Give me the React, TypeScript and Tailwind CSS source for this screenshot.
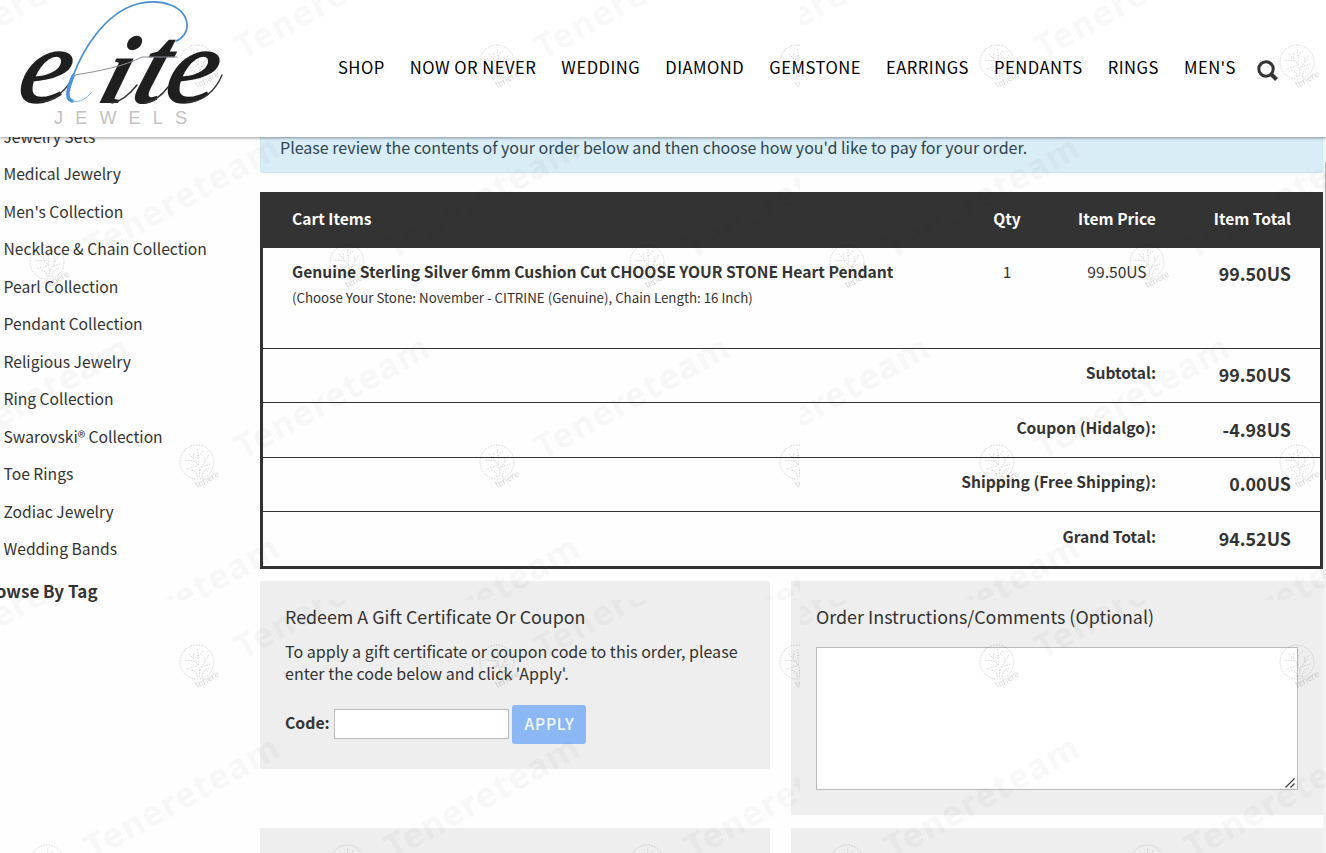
import React from "react";

type OrderRow = {
  label: string;
  value: string;
  height: string;
};

const navLinks = [
  "SHOP",
  "NOW OR NEVER",
  "WEDDING",
  "DIAMOND",
  "GEMSTONE",
  "EARRINGS",
  "PENDANTS",
  "RINGS",
  "MEN'S",
];

const categories = [
  "Jewelry Sets",
  "Medical Jewelry",
  "Men's Collection",
  "Necklace & Chain Collection",
  "Pearl Collection",
  "Pendant Collection",
  "Religious Jewelry",
  "Ring Collection",
  "Swarovski® Collection",
  "Toe Rings",
  "Zodiac Jewelry",
  "Wedding Bands",
];

const orderRows: OrderRow[] = [
  { label: "Subtotal:", value: "99.50US", height: "h-[54px] pt-[11px]" },
  { label: "Coupon (Hidalgo):", value: "-4.98US", height: "h-[55px] pt-[12px]" },
  { label: "Shipping (Free Shipping):", value: "0.00US", height: "h-[54px] pt-[11px]" },
  { label: "Grand Total:", value: "94.52US", height: "h-[55px] pt-[12px]" },
];

const Logo = () => (
  <svg width="230" height="137" viewBox="0 0 230 137" className="shrink-0">
    <g
      fontFamily="'Liberation Serif', serif"
      fontStyle="italic"
      fontSize="106"
      fill="#1f1f1f"
      stroke="#1f1f1f"
    >
      <text transform="translate(15 101.5) skewX(-12) scale(1.08 1)" strokeWidth="1.6">e</text>
      <text transform="translate(97 103) skewX(-17) scale(1 1)" fontWeight="bold" fontSize="97" stroke="none">i</text>
      <text transform="translate(129 103) skewX(-20) scale(0.92 1.06)" fontWeight="bold" stroke="none">t</text>
      <text transform="translate(162 101.5) skewX(-12) scale(1.08 1)" strokeWidth="1.6">e</text>
    </g>
    <g fill="none" strokeLinecap="round">
      <path d="M75 75 C100 71 125 66 142 57 L177 57" stroke="#8a8f94" strokeWidth="1" />
      <path d="M40 102 C56 101 68 88 74 75" stroke="#333" strokeWidth="1.4" />
      <path d="M187 102 C203 102 216 90 222 75" stroke="#333" strokeWidth="1.4" />
      <path d="M112 103 C122 101 130 94 137 85" stroke="#333" strokeWidth="1.4" />
      <path d="M145 103 C155 101 163 94 168 87" stroke="#333" strokeWidth="1.4" />
      <path
        d="M73 76 C82 52 103 14 137 4 C162 -2 185 6 187 24 C188 32 182 39 176 41"
        stroke="#4a8fcf"
        strokeWidth="1.7"
      />
      <path
        d="M73 76 C68 88 65 99 72 101 C80 103 87 98 91 93"
        stroke="#7fb3e2"
        strokeWidth="1"
      />
      <path d="M73 76 C68 88 65 99 72 101" stroke="#4a94dc" strokeWidth="3.6" />
    </g>
    <text
      x="54"
      y="124"
      fontFamily="'Liberation Sans', sans-serif"
      fontSize="18"
      fill="#c2c2c2"
      textLength="133"
    >
      JEWELS
    </text>
  </svg>
);

const SearchIcon = () => (
  <svg width="22" height="22" viewBox="0 0 22 22" fill="none" stroke="#333">
    <circle cx="9" cy="9" r="7.2" strokeWidth="3" />
    <path d="M14.2 14.2 L19.5 19.5" strokeWidth="4" />
  </svg>
);

// Small round tree emblem, centred on x,y
const Tree = ({ x, y }: { x: number; y: number }) => (
  <g transform={`translate(${x} ${y})`} fill="none" stroke="#000">
    <g strokeWidth="0.8" strokeDasharray="1.6 1.2" opacity="0.19">
      <circle r="17" />
      <path d="M2 15 C4 6 1 2 -4 -4 L-9 -9 M3 8 C7 1 9 -3 12 -7 M1 3 C2 -4 0 -9 1 -13 M-2 -1 L-12 -2 M0 4 L-11 7 M4 5 L13 2 M5 15 C6 9 8 6 12 7 M0 15 C0 10 -3 8 -7 8 M1 -6 L6 -11 M-4 -4 L-3 -10 M8 0 L7 -6" />
    </g>
    <text
      transform="translate(0 26) rotate(-28)"
      fontFamily="'Noto Sans', sans-serif"
      fontSize="9"
      textLength="26"
      fill="#000"
      fillOpacity="0.16"
      stroke="none"
    >
      tenere
    </text>
  </g>
);

const Mark = ({ x, y }: { x: number; y: number }) => (
  <text
    transform={`translate(${x} ${y}) rotate(-29)`}
    fontFamily="'Noto Sans', sans-serif"
    fontWeight="bold"
    fontSize="34"
    textLength="216"
    fill="#000"
    fillOpacity="0.026"
  >
    Tenereteam
  </text>
);

const Watermark = () => (
  <svg className="pointer-events-none absolute inset-0 z-20 h-full w-full">
    <defs>
      <pattern id="tenere" width="800" height="600" patternUnits="userSpaceOnUse">
        {[62, 462].map((y) =>
          [197, 497, 797].map((x) => <Tree key={`${x}-${y}`} x={x} y={y} />)
        )}
        {[47, 347, 647].map((x) => (
          <Tree key={x} x={x} y={262} />
        ))}
        {[60, 460].map((y) =>
          [-57, 243, 543].map((x) => <Mark key={`${x}-${y}`} x={x} y={y} />)
        )}
        {[260, 660].map((y) =>
          [93, 393, 693, -207].map((x) => <Mark key={`${x}-${y}`} x={x} y={y} />)
        )}
      </pattern>
    </defs>
    <rect width="100%" height="100%" fill="url(#tenere)" />
  </svg>
);

const Header = () => (
  <header className="relative z-10 flex h-[137px] w-full shrink-0 bg-white shadow-[0_1px_3px_rgba(0,0,0,0.4)]">
    <Logo />
    <nav className="ml-[108px] mt-[53px] flex h-7 gap-[25.1px] text-[16.6px] leading-7 tracking-[0.48px] text-black">
      {navLinks.map((link) => (
        <a key={link} href="#" className="whitespace-nowrap">
          {link}
        </a>
      ))}
    </nav>
    <button className="ml-[21px] mt-[60px] h-[22px] w-[22px]" aria-label="Search">
      <SearchIcon />
    </button>
  </header>
);

const Sidebar = () => (
  <aside className="-mt-[19.5px] w-[260px] shrink-0">
    <ul className="pl-[3.5px] text-[15.65px] leading-[37.5px]">
      {categories.map((category) => (
        <li key={category} className="h-[37.5px] whitespace-nowrap">
          {category}
        </li>
      ))}
    </ul>
    <h3 className="-ml-[23px] mt-[4px] text-[17px] font-bold leading-[38px]">
      Browse By Tag
    </h3>
  </aside>
);

const CartTable = () => (
  <section className="mt-[19px] flex h-[377px] flex-col border-[3px] border-[#333]">
    <div className="flex h-[53px] shrink-0 bg-[#333] pl-[29px] pr-[29px] text-[15.6px] font-bold leading-[47px] text-white">
      <span className="w-[675px]">Cart Items</span>
      <span className="w-[80px] text-center">Qty</span>
      <span className="w-[120px] pl-[20px] text-center">Item Price</span>
      <span className="flex-1 text-right">Item Total</span>
    </div>
    <div className="flex h-[101px] shrink-0 border-b border-[#333] pl-[29px] pr-[29px]">
      <div className="w-[675px] pt-[12px]">
        <h4 className="text-[15.63px] font-bold leading-6">
          Genuine Sterling Silver 6mm Cushion Cut CHOOSE YOUR STONE Heart Pendant
        </h4>
        <p className="mt-[3px] text-[13.3px] leading-[22px]">
          (Choose Your Stone: November - CITRINE (Genuine), Chain Length: 16 Inch)
        </p>
      </div>
      <span className="w-[80px] pt-[11px] text-center text-[15.6px] leading-6">1</span>
      <span className="w-[120px] pl-[20px] pt-[11px] text-center text-[15.6px] leading-6">
        99.50US
      </span>
      <span className="flex-1 pt-[13px] text-right text-[17.9px] font-bold leading-6">
        99.50US
      </span>
    </div>
    {orderRows.map((row) => (
      <div
        key={row.label}
        className={`${row.height} flex shrink-0 border-b border-[#333] pr-[29px] font-bold last:border-b-0`}
      >
        <span className="w-[893px] text-right text-[15.6px] leading-6">{row.label}</span>
        <span className="flex-1 pt-[2px] text-right text-[17.9px] leading-6">
          {row.value}
        </span>
      </div>
    ))}
  </section>
);

const CouponCard = () => (
  <section className="h-[188px] w-[510px] rounded-[2px] bg-[#eee] pl-[25px] pt-[21px]">
    <h3 className="text-[17.85px] leading-7">Redeem A Gift Certificate Or Coupon</h3>
    <p className="mt-[10px] w-[470px] text-[16.05px] leading-[22px]">
      To apply a gift certificate or coupon code to this order, please
      <br />
      enter the code below and click 'Apply'.
    </p>
    <div className="mt-[21px] flex items-start">
      <label className="mt-[6px] w-[49px] text-[15.8px] font-bold leading-6">Code:</label>
      <input className="mt-[4px] h-[30px] w-[175px] border border-[#bbb] bg-white" />
      <button className="ml-[3px] h-[39px] w-[74px] rounded-[3px] bg-[#8bb7f5] pb-px pl-px text-[15.6px] font-medium tracking-[0.8px] text-[#f4f9ff]">
        APPLY
      </button>
    </div>
  </section>
);

const CommentsCard = () => (
  <section className="h-[234px] w-[532px] bg-[#eee] pl-[25px] pt-[21px]">
    <h3 className="text-[17.9px] leading-7">Order Instructions/Comments (Optional)</h3>
    <div className="relative mt-[17px] w-[482px]">
      <textarea className="block h-[143px] w-full resize-none border border-[#bbb] bg-white" />
      <svg
        className="absolute bottom-[2px] right-[3px]"
        width="10"
        height="10"
        viewBox="0 0 10 10"
        stroke="#444"
        strokeWidth="1.3"
      >
        <path d="M0.5 9.5 L9.5 0.5 M5.5 9.5 L9.5 5.5" />
      </svg>
    </div>
  </section>
);

const Scrollbar = () => (
  <div className="flex w-[3px] shrink-0 flex-col items-end bg-[#f3f3f3] pt-[25px]">
    <div className="h-[318px] w-px bg-[#b5b5b5]" />
  </div>
);

export default function App() {
  return (
    <div className="relative flex h-screen w-full flex-col overflow-hidden bg-[#fefefe] font-['Noto_Sans_CJK_SC',sans-serif] text-[#333]">
      <Header />
      <div className="flex h-[716px]">
        <Sidebar />
        <main className="w-[1063px] shrink-0">
          <div className="h-[36px] rounded-b-[3px] border border-t-0 border-[#cfe8f0] bg-[#d9edf7] pl-[19px] text-[16.05px] leading-[21px] text-[#2f4550]">
            Please review the contents of your order below and then choose how you'd like to pay for your order.
          </div>
          <CartTable />
          <div className="mt-[12px] flex items-start gap-[21px]">
            <CouponCard />
            <CommentsCard />
          </div>
          <div className="mt-[13px] flex gap-[21px]">
            <div className="h-[60px] w-[510px] bg-[#eee]" />
            <div className="h-[60px] w-[532px] bg-[#eee]" />
          </div>
        </main>
        <Scrollbar />
      </div>
      <Watermark />
    </div>
  );
}
